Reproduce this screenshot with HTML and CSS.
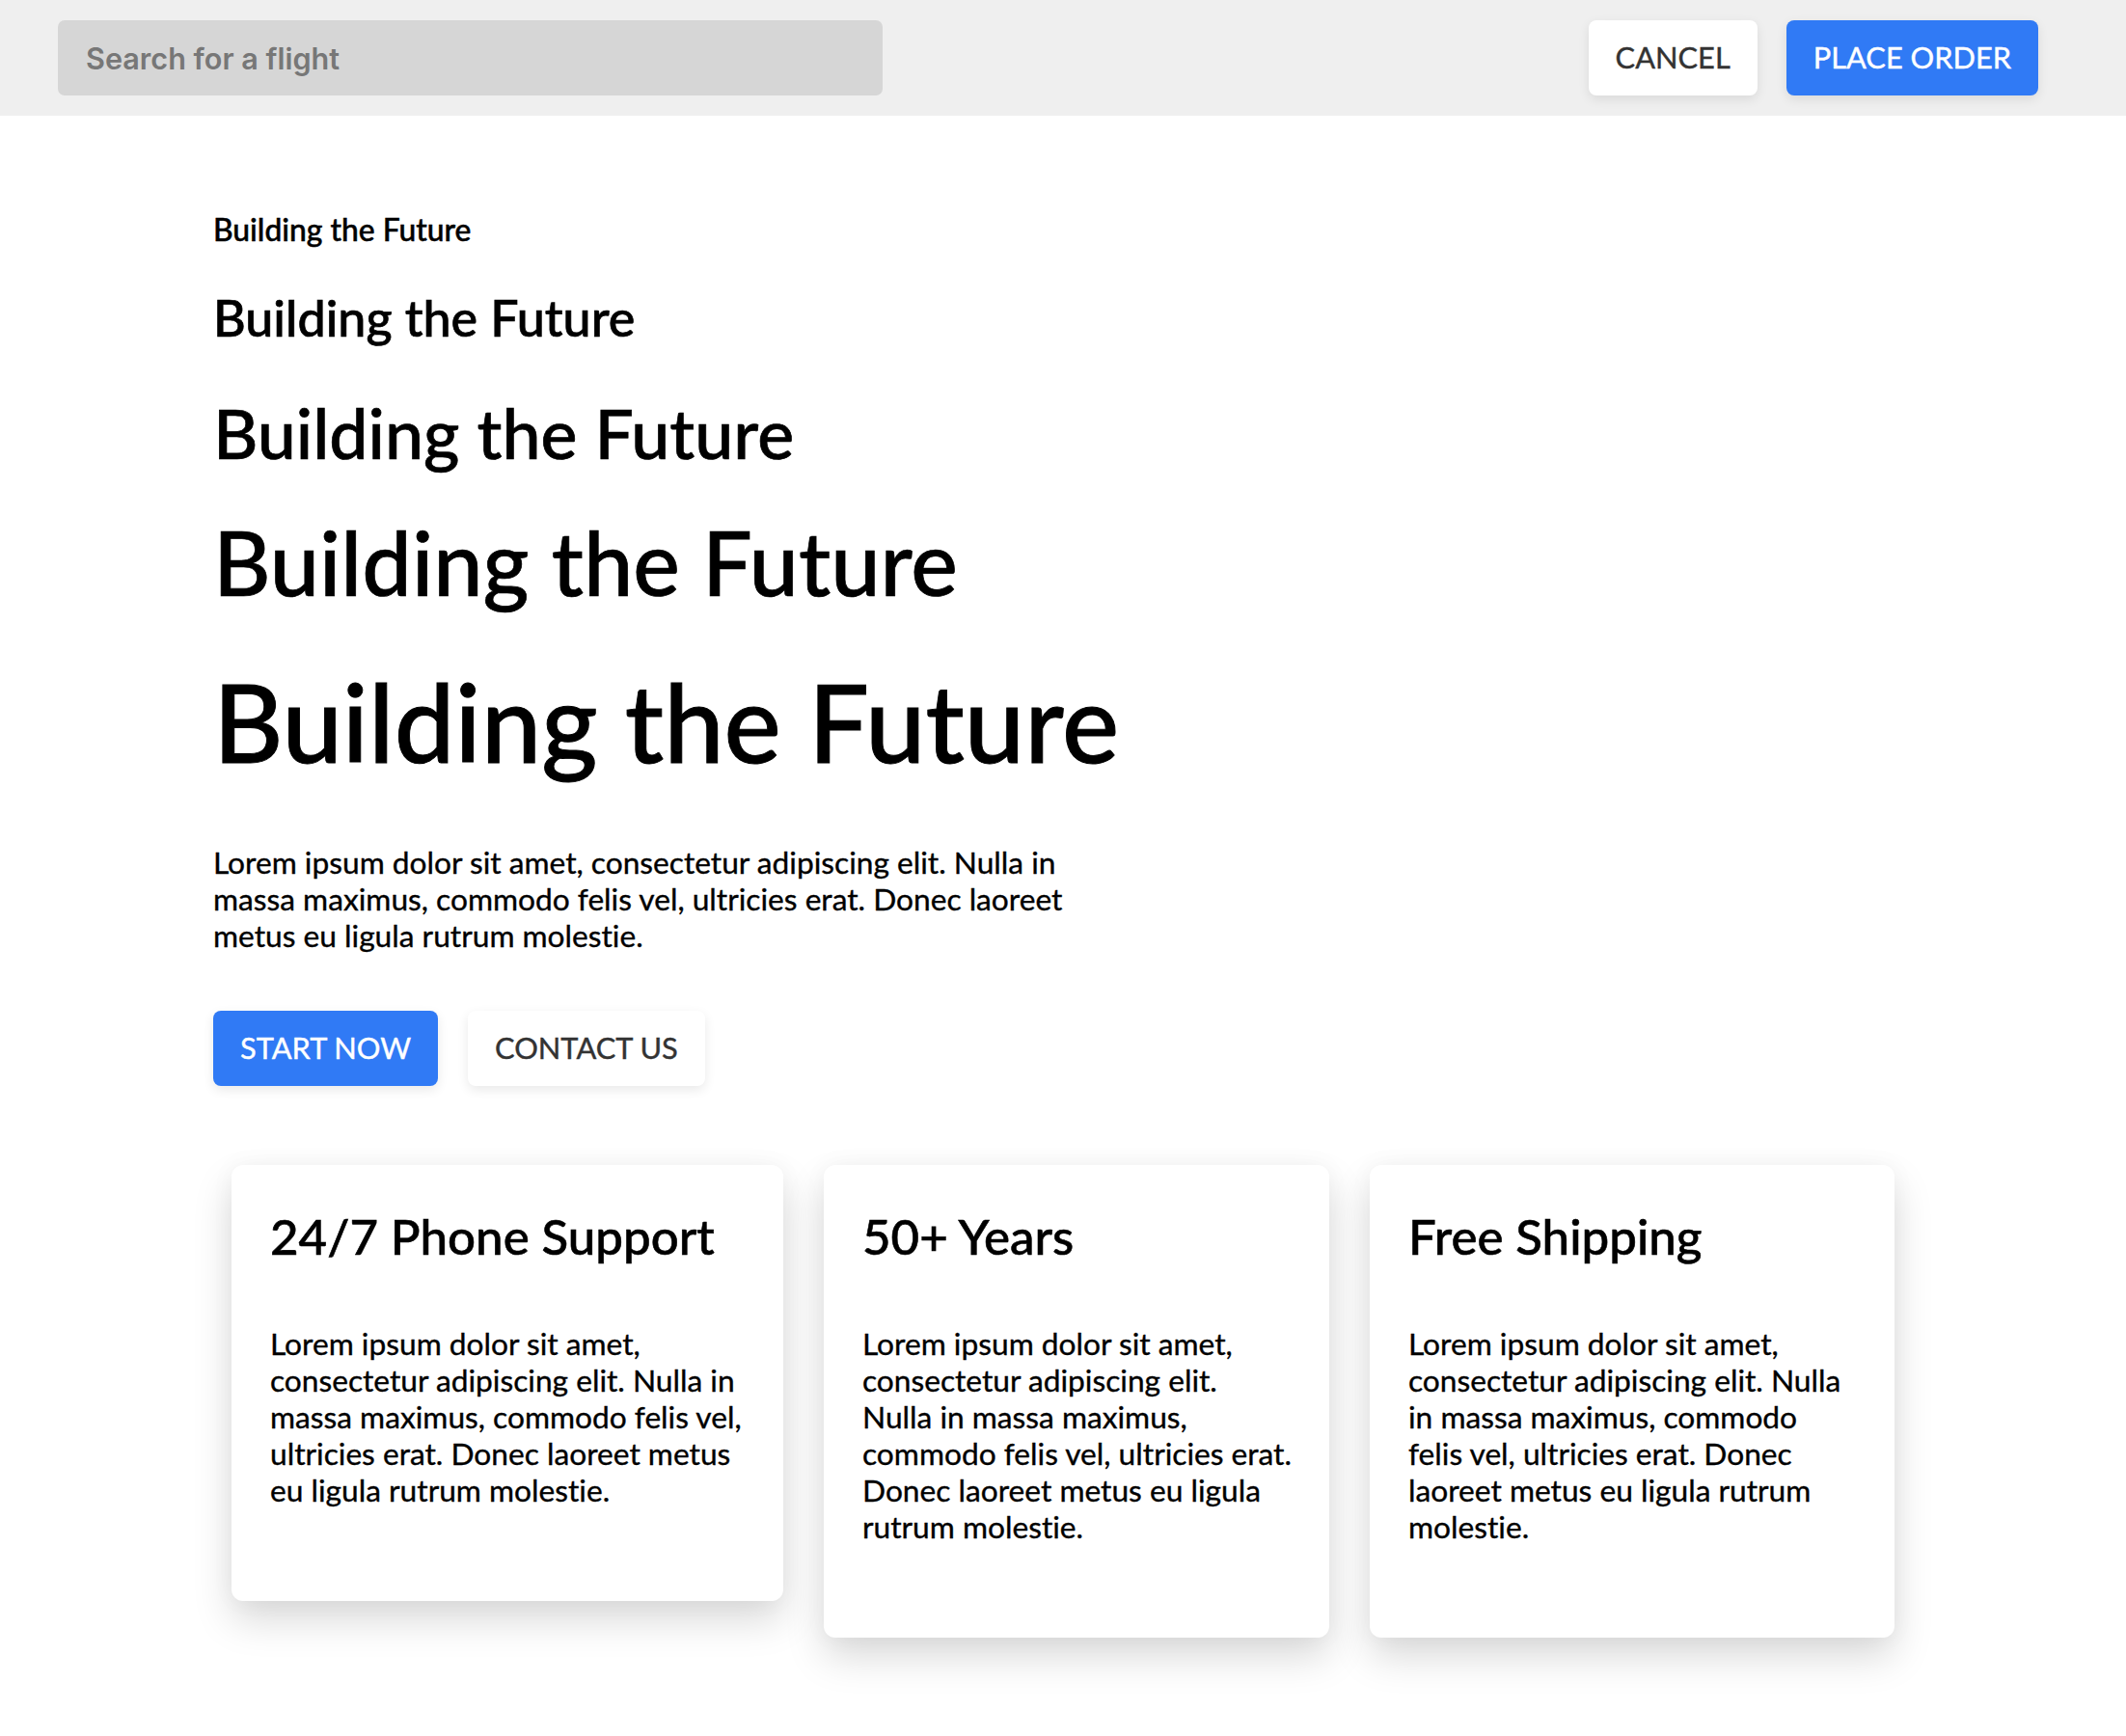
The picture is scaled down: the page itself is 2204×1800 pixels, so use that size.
FILE: index.html
```html
<!DOCTYPE html>
<html lang="en">
<head>
<meta charset="utf-8">
<title>Building the Future</title>
<link rel="stylesheet" href="styles.css">
</head>
<body>
<header class="topbar">
  <input class="search" type="text" placeholder="Search for a flight">
  <div class="actions">
    <button class="btn btn-light">Cancel</button>
    <button class="btn btn-primary">Place Order</button>
  </div>
</header>
<main class="hero">
  <h6 class="h h6">Building the Future</h6>
  <h5 class="h h5">Building the Future</h5>
  <h4 class="h h4">Building the Future</h4>
  <h3 class="h h3">Building the Future</h3>
  <h2 class="h h2">Building the Future</h2>
  <p class="lead">Lorem ipsum dolor sit amet, consectetur adipiscing elit. Nulla in massa maximus, commodo felis vel, ultricies erat. Donec laoreet metus eu ligula rutrum molestie.</p>
  <div class="cta">
    <button class="btn btn-primary">Start Now</button>
    <button class="btn btn-light">Contact Us</button>
  </div>
  <section class="features">
    <article class="card">
      <h3 class="card-title">24/7 Phone Support</h3>
      <p class="card-text">Lorem ipsum dolor sit amet, consectetur adipiscing elit. Nulla in massa maximus, commodo felis vel, ultricies erat. Donec laoreet metus eu ligula rutrum molestie.</p>
    </article>
    <article class="card">
      <h3 class="card-title">50+ Years</h3>
      <p class="card-text">Lorem ipsum dolor sit amet, consectetur adipiscing elit. Nulla in massa maximus, commodo felis vel, ultricies erat. Donec laoreet metus eu ligula rutrum molestie.</p>
    </article>
    <article class="card">
      <h3 class="card-title">Free Shipping</h3>
      <p class="card-text">Lorem ipsum dolor sit amet, consectetur adipiscing elit. Nulla in massa maximus, commodo felis vel, ultricies erat. Donec laoreet metus eu ligula rutrum molestie.</p>
    </article>
  </section>
</main>
</body>
</html>
```
FILE: styles.css
```css
* { box-sizing: border-box; }
html, body { margin: 0; padding: 0; background: #ffffff; }
body {
  font-family: "Lato", "Liberation Sans", sans-serif;
  font-variant-ligatures: no-common-ligatures;
  color: #000000;
}

.topbar {
  height: 120px;
  background: #efefef;
  display: flex;
  align-items: center;
  justify-content: space-between;
  padding: 0 91px 0 60px;
}

.search {
  width: 855px;
  height: 78px;
  border: none;
  outline: none;
  border-radius: 7px;
  background: #d6d6d6;
  padding: 0 29px;
  font-family: "Inter", "Liberation Sans", sans-serif;
  font-size: 30.6px;
  font-weight: 600;
  color: #333;
}
.search::placeholder { color: #777777; }

.actions { display: flex; gap: 30px; }

.btn {
  font-family: "Lato", "Liberation Sans", sans-serif;
  font-size: 30.8px;
  line-height: 38px;
  text-transform: uppercase;
  border: none;
  border-radius: 8px;
  padding: 20px 28px;
  cursor: pointer;
  -webkit-text-stroke: 0.4px currentColor;
  box-shadow: 0 4px 12px rgba(0, 0, 0, 0.09);
}
.btn-light { background: #ffffff; color: #333333; }
.btn-primary { background: #307af5; color: #ffffff; }

.hero { padding: 99px 221px 120px; }

.h { margin: 0; font-weight: 500; -webkit-text-stroke: 0.7px currentColor; }
.h6 { font-size: 31.8px; line-height: 39.6px; margin-bottom: 38px; -webkit-text-stroke: 0.5px currentColor; }
.h5 { font-size: 52px; line-height: 64.8px; margin-bottom: 43px; }
.h4 { font-size: 71.6px; line-height: 89.3px; margin-bottom: 32px; }
.h3 { font-size: 91.8px; line-height: 114.4px; margin-bottom: 39px; }
.h2 { font-size: 111.7px; line-height: 139.2px; margin-bottom: 57px; -webkit-text-stroke: 0.9px currentColor; }

.lead {
  margin: 0 0 59px;
  max-width: 910px;
  font-size: 31.7px;
  line-height: 38px;
  -webkit-text-stroke: 0.35px currentColor;
}

.cta { display: flex; gap: 31px; margin-bottom: 82px; }

.features {
  display: grid;
  grid-template-columns: 572px 524px 544px;
  column-gap: 42px;
  align-items: start;
  margin-left: 19px;
}

.card {
  background: #ffffff;
  border-radius: 12px;
  padding: 43px 39px 96px 40px;
  box-shadow: 0 20px 40px rgba(0, 0, 0, 0.15), 0 0 26px rgba(0, 0, 0, 0.04);
}
.card-title {
  margin: 0 0 62px;
  font-size: 51px;
  font-weight: 500;
  line-height: 1.2;
  -webkit-text-stroke: 0.6px currentColor;
}
.card-text {
  margin: 0;
  font-size: 31.7px;
  line-height: 38px;
  -webkit-text-stroke: 0.35px currentColor;
}
```
